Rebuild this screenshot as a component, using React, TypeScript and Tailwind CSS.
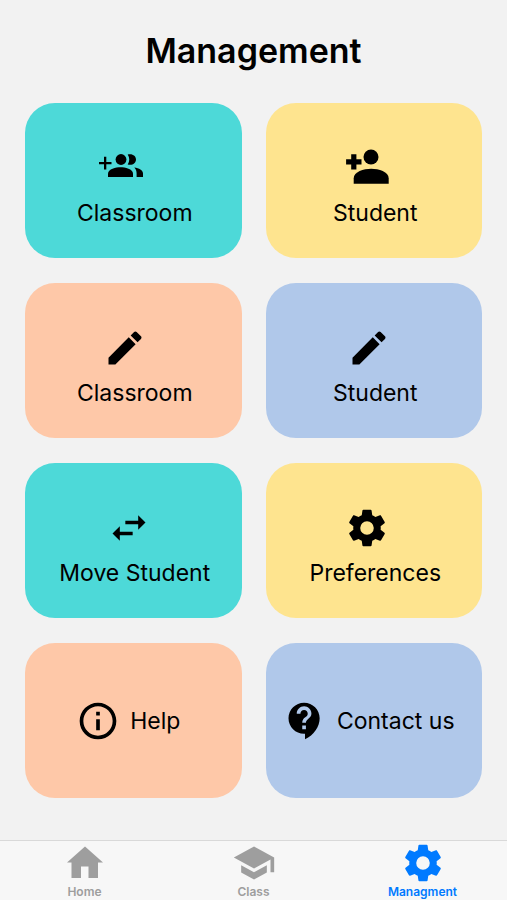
import type { ReactNode } from "react";
import { IoMdCreate } from "react-icons/io";
import { MdContactSupport, MdInfoOutline, MdSchool, MdSwapHoriz } from "react-icons/md";

function GroupAddIcon({ className }: { className: string }) {
  return (
    <svg viewBox="0 0 44 44" fill="currentColor" className={className} aria-hidden="true">
      <path d="M5 10.700h2.300v5.200h5.200v2.300H7.300v5.200H5v-5.200H0v-2.300h5z" />
      <circle cx="22" cy="13.500" r="5.400" />
      <path d="M9 31v-3.500c0-4.300 8-6.200 12.500-6.200S34 23.200 34 27.500V31z" />
      <path d="M28.700 8.500c4.800-1.300 8.300 1.500 8.300 5s-3.500 6.300-8.300 5c2.100-3 2.100-7 0-10z" />
      <path d="M35.300 21.600c4.700.8 8.700 2.600 8.700 5.900V31h-6.400v-3.500c0-2.500-.8-4.400-2.300-5.900z" />
    </svg>
  );
}

function PersonAddIcon({ className }: { className: string }) {
  return (
    <svg viewBox="0 0 44 44" fill="currentColor" className={className} aria-hidden="true">
      <path d="M6.200 8.200h5.200v5h5.100v5.200h-5.100v5.100H6.200v-5.100H1.100v-5.200h5.100z" />
      <circle cx="26" cy="11" r="7.500" />
      <path d="M8.700 37.800v-5.500c0-6.500 10-9.600 17.500-9.600s17.500 3.100 17.500 9.600v5.500z" />
    </svg>
  );
}

function GearIcon({ className }: { className: string }) {
  return (
    <svg viewBox="0 0 24 24" fill="currentColor" fillRule="evenodd" className={className} aria-hidden="true">
      <path d="M19.43 12.98c.04-.32.07-.64.07-.98s-.03-.66-.07-.98l2.11-1.65c.19-.15.24-.42.12-.64l-2-3.46c-.12-.22-.39-.3-.61-.22l-2.49 1c-.52-.4-1.08-.73-1.69-.98l-.38-2.65C14.46 2.18 14.25 2 14 2h-4c-.25 0-.46.18-.49.42l-.38 2.65c-.61.25-1.17.59-1.69.98l-2.49-1c-.23-.09-.49 0-.61.22l-2 3.46c-.13.22-.07.49.12.64l2.11 1.65c-.04.32-.07.65-.07.98s.03.66.07.98l-2.11 1.65c-.19.15-.24.42-.12.64l2 3.46c.12.22.39.3.61.22l2.49-1c.52.4 1.08.73 1.69.98l.38 2.65c.03.24.24.42.49.42h4c.25 0 .46-.18.49-.42l.38-2.65c.61-.25 1.17-.59 1.69-.98l2.49 1c.23.09.49 0 .61-.22l2-3.46c.12-.22.07-.49-.12-.64l-2.11-1.65zM12 15.700a3.700 3.700 0 1 1 0-7.400 3.700 3.700 0 0 1 0 7.400z" />
    </svg>
  );
}

function HomeIcon({ className }: { className: string }) {
  return (
    <svg viewBox="0 0 44 44" fill="currentColor" className={className} aria-hidden="true">
      <path d="M22 5.500 4 21.500h4.500V37H18V25.500h7.500V37H35V21.500h5z" />
    </svg>
  );
}

type Card = { label: string; color: string; icon: ReactNode; shift?: string; inline?: boolean };

const cards: Card[] = [
  { label: "Classroom", color: "bg-[#4dd9d8]", icon: <GroupAddIcon className="size-11" />, shift: "pr-7" },
  { label: "Student", color: "bg-[#fee48f]", icon: <PersonAddIcon className="size-11" />, shift: "pr-4" },
  { label: "Classroom", color: "bg-[#fec8a8]", icon: <IoMdCreate className="size-11" />, shift: "pr-5" },
  { label: "Student", color: "bg-[#b0c8ea]", icon: <IoMdCreate className="size-11" />, shift: "pr-3" },
  { label: "Move Student", color: "bg-[#4dd9d8]", icon: <MdSwapHoriz className="size-11" />, shift: "pr-3" },
  { label: "Preferences", color: "bg-[#fee48f]", icon: <GearIcon className="size-11" />, shift: "pr-4" },
  { label: "Help", color: "bg-[#fec8a8]", icon: <MdInfoOutline className="size-11" />, inline: true },
  { label: "Contact us", color: "bg-[#b0c8ea]", icon: <MdContactSupport className="size-11" />, inline: true },
];

function ManagementCard({ label, color, icon, shift, inline }: Card) {
  const layout = inline ? "flex-row gap-2.5 pr-2.5" : "flex-col gap-2 pt-3 pl-[3px]";
  return (
    <button
      type="button"
      className={`flex h-[155px] items-center justify-center rounded-[30px] text-black ${color} ${layout}`}
    >
      <span className={shift}>{icon}</span>
      <span className="text-[23px] leading-[30px] whitespace-nowrap">{label}</span>
    </button>
  );
}

const tabs = [
  { label: "Home", icon: <HomeIcon className="size-11" />, active: false },
  { label: "Class", icon: <MdSchool className="size-11" />, active: false },
  { label: "Managment", icon: <GearIcon className="size-11" />, active: true },
];

export default function App() {
  return (
    <div className="flex min-h-screen flex-col bg-[#f2f2f2] font-['Inter','Liberation_Sans',sans-serif]">
      <main className="flex-1 px-[25px]">
        <h1 className="pt-[29px] text-center text-[34px] leading-[44px] font-semibold text-black">Management</h1>
        <div className="grid grid-cols-2 gap-x-6 gap-y-[25px] pt-[30px] pb-6">
          {cards.map((card, i) => (
            <ManagementCard key={i} {...card} />
          ))}
        </div>
      </main>
      <nav className="grid h-[60px] grid-cols-3 border-t border-[#d9d9d9] bg-[#f7f7f7]">
        {tabs.map((tab) => (
          <a
            key={tab.label}
            href="#"
            aria-current={tab.active ? "page" : undefined}
            className={`flex flex-col items-center ${tab.active ? "text-[#007aff]" : "text-[#9e9e9e]"}`}
          >
            {tab.icon}
            <span className="text-[12px] leading-[14px] font-semibold">{tab.label}</span>
          </a>
        ))}
      </nav>
    </div>
  );
}
